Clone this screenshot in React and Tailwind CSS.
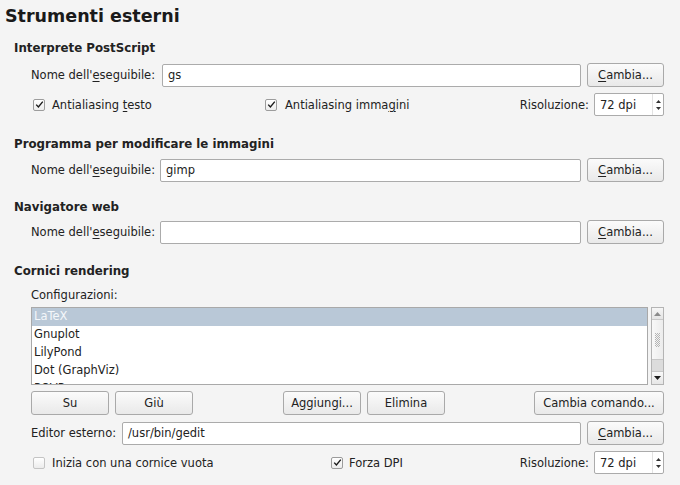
import React from 'react';

function U({ children }) {
  return <span className="underline underline-offset-2 decoration-1">{children}</span>;
}

function Button({ children, className = '' }) {
  return (
    <div
      className={
        'h-[24px] flex items-center justify-center rounded-[3px] border border-[#a9a9a9] bg-gradient-to-b from-[#fbfbfb] to-[#e9e9e9] text-[#222] whitespace-nowrap ' +
        className
      }
    >
      {children}
    </div>
  );
}

function TextInput({ value, className = '' }) {
  return (
    <div
      className={
        'h-[23px] flex items-center rounded-[2px] border border-[#ababab] bg-white pl-[5px] text-[#222] ' +
        className
      }
    >
      {value}
    </div>
  );
}

function Check({ checked }) {
  return (
    <div
      className={
        'w-[12px] h-[12px] rounded-[2px] border flex items-center justify-center bg-gradient-to-b from-white to-[#ececec] ' +
        (checked ? 'border-[#9c9c9c]' : 'border-[#c4c4c4]')
      }
    >
      {checked && (
        <svg width="9" height="9" viewBox="0 0 9 9">
          <path d="M1.2 4.6 L3.4 7 L7.8 1.6" fill="none" stroke="#1a1a1a" strokeWidth="1.4" />
        </svg>
      )}
    </div>
  );
}

function Spin() {
  return (
    <div className="w-[70px] h-[23px] flex rounded-[2px] border border-[#ababab] bg-white">
      <div className="flex-1 flex items-center pl-[5px] text-[#222]">72 dpi</div>
      <div className="w-[11px] flex flex-col items-center justify-center gap-[4px] border-l border-[#e2e2e2]">
        <svg width="5" height="3" viewBox="0 0 5 3">
          <path d="M0 3 L2.5 0 L5 3 Z" fill="#333" />
        </svg>
        <svg width="5" height="3" viewBox="0 0 5 3">
          <path d="M0 0 L2.5 3 L5 0 Z" fill="#333" />
        </svg>
      </div>
    </div>
  );
}

function ExeRow({ value, labelW = 'w-[131px]', label }) {
  return (
    <div className="flex items-center h-[24px] pl-[31px] pr-[16px]">
      <div className={'shrink-0 whitespace-nowrap ' + labelW}>{label}</div>
      <TextInput value={value} className="flex-1" />
      <Button className="w-[77px] ml-[6px]">
        <U>C</U>ambia...
      </Button>
    </div>
  );
}

const exeLabel = (
  <span>
    Nome dell'<U>e</U>seguibile:
  </span>
);

export default function App() {
  const items = ['LaTeX', 'Gnuplot', 'LilyPond', 'Dot (GraphViz)', 'POVRay'];

  return (
    <div className="w-[680px] h-[485px] overflow-hidden bg-[#f4f4f4] text-[11.5px] leading-[16px] text-[#222] font-['DejaVu_Sans',sans-serif]">
      <div className="mt-[6px] ml-[5px] text-[17.5px] leading-[20px] font-bold text-[#1a1a1a]">Strumenti esterni</div>

      {/* PostScript */}
      <div className="mt-[14px] ml-[14px] text-[11.8px] font-bold">Interprete PostScript</div>
      <div className="mt-[7px]">
        <ExeRow value="gs" label={exeLabel} />
      </div>
      <div className="mt-[6px] flex items-center h-[23px] pl-[33px] pr-[16px] whitespace-nowrap">
        <Check checked />
        <span className="ml-[7px] w-[213px]">
          Antialiasing <U>t</U>esto
        </span>
        <Check checked />
        <span className="ml-[8px]">
          Antialiasing imma<U>g</U>ini
        </span>
        <span className="ml-auto mr-[5px]">Risoluzione:</span>
        <Spin />
      </div>

      {/* immagini */}
      <div className="mt-[20px] ml-[14px] text-[11.8px] font-bold">Programma per modificare le immagini</div>
      <div className="mt-[6px]">
        <ExeRow value="gimp" labelW="w-[129px]" label={exeLabel} />
      </div>

      {/* web */}
      <div className="mt-[17px] ml-[14px] text-[11.8px] font-bold">Navigatore web</div>
      <div className="mt-[5px]">
        <ExeRow value="" labelW="w-[129px]" label={exeLabel} />
      </div>

      {/* rendering */}
      <div className="mt-[19px] ml-[14px] text-[11.8px] font-bold">Cornici rendering</div>
      <div className="mt-[8px] ml-[31px]">Configurazioni:</div>
      <div className="mt-[4px] flex pl-[31px] pr-[16px] h-[78px]">
        <div className="flex-1 border border-[#a9a9a9] bg-white overflow-hidden">
          {items.map((it, i) => (
            <div
              key={it}
              className={
                'h-[18px] leading-[16px] pl-[2px] ' + (i === 0 ? 'bg-[#b9c8d7] text-[#f4f7fa]' : 'text-[#222]')
              }
            >
              {it}
            </div>
          ))}
        </div>
        <div className="ml-[3px] w-[13px] flex flex-col border border-[#b4b4b4] bg-[#dcdcdc]">
          <div className="h-[12px] flex items-center justify-center bg-gradient-to-b from-[#f6f6f6] to-[#e4e4e4] border-b border-[#c8c8c8]">
            <svg width="7" height="4" viewBox="0 0 7 4">
              <path d="M0 4 L3.5 0 L7 4 Z" fill="#8a8a8a" />
            </svg>
          </div>
          <div className="h-[40px] flex items-center justify-center bg-gradient-to-r from-[#f8f8f8] to-[#ececec] border-b border-[#c8c8c8]">
            <svg width="5" height="14" viewBox="0 0 5 14">
              {[0, 2, 4, 6, 8, 10, 12].map((y) => (
                <g key={y} fill="#b5b5b5">
                  <rect x="0" y={y} width="1" height="1" />
                  <rect x="2" y={y} width="1" height="1" />
                  <rect x="4" y={y} width="1" height="1" />
                  <rect x="1" y={y + 1} width="1" height="1" />
                  <rect x="3" y={y + 1} width="1" height="1" />
                </g>
              ))}
            </svg>
          </div>
          <div className="flex-1" />
          <div className="h-[13px] flex items-center justify-center bg-gradient-to-b from-[#fafafa] to-[#e6e6e6] border-t border-[#c8c8c8]">
            <svg width="7" height="4" viewBox="0 0 7 4">
              <path d="M0 0 L3.5 4 L7 0 Z" fill="#1e1e1e" />
            </svg>
          </div>
        </div>
      </div>

      <div className="mt-[6px] flex items-center pl-[31px] pr-[16px]">
        <Button className="w-[78px]">Su</Button>
        <Button className="w-[78px] ml-[6px]">Giù</Button>
        <Button className="w-[78px] ml-[90px]">Aggiungi...</Button>
        <Button className="w-[78px] ml-[6px]">Elimina</Button>
        <Button className="w-[130px] ml-auto">Cambia comando...</Button>
      </div>

      <div className="mt-[6px]">
        <ExeRow value="/usr/bin/gedit" labelW="w-[91px]" label={<span>Editor esterno:</span>} />
      </div>

      <div className="mt-[6px] flex items-center h-[23px] pl-[33px] pr-[16px] whitespace-nowrap">
        <Check />
        <span className="ml-[7px] w-[279px]">Inizia con una cornice vuota</span>
        <Check checked />
        <span className="ml-[6px]">Forza DPI</span>
        <span className="ml-auto mr-[5px]">Risoluzione:</span>
        <Spin />
      </div>
    </div>
  );
}
